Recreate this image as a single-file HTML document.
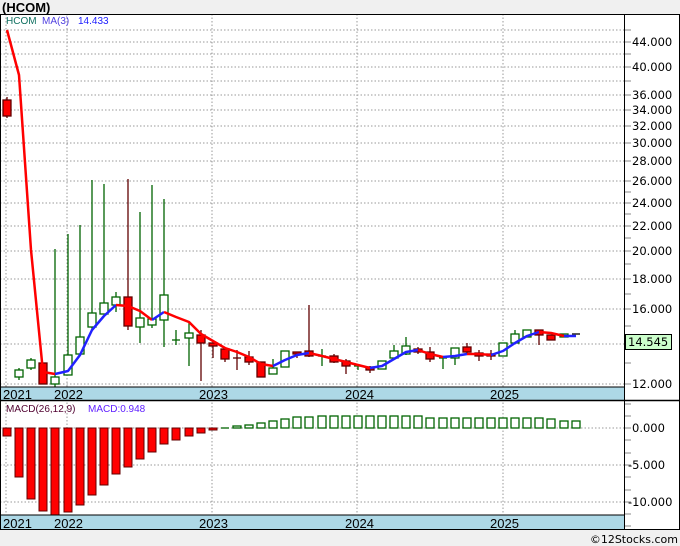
<!DOCTYPE html>
<html><head><meta charset="utf-8"><style>
body{margin:0;width:680px;height:546px;background:#f0f0f0;overflow:hidden;font-family:"Liberation Sans",sans-serif}
svg{position:absolute;left:0;top:0}
</style></head><body>
<svg width="680" height="546" viewBox="0 0 680 546" xmlns="http://www.w3.org/2000/svg" font-family="Liberation Sans, DejaVu Sans, sans-serif">
<rect x="0" y="0" width="680" height="546" fill="#f0f0f0"/>
<text x="2" y="12" font-size="13" font-weight="bold" fill="#000">(HCOM)</text>
<rect x="0" y="14" width="680" height="516" fill="#fff"/>
<g stroke="#999" stroke-dasharray="1.5,2" stroke-width="1">
<line x1="0" x2="624" y1="30" y2="30"/><line x1="0" x2="624" y1="42" y2="42"/><line x1="0" x2="624" y1="54" y2="54"/><line x1="0" x2="624" y1="67" y2="67"/><line x1="0" x2="624" y1="81" y2="81"/><line x1="0" x2="624" y1="95" y2="95"/><line x1="0" x2="624" y1="110" y2="110"/><line x1="0" x2="624" y1="126" y2="126"/><line x1="0" x2="624" y1="143" y2="143"/><line x1="0" x2="624" y1="161" y2="161"/><line x1="0" x2="624" y1="181" y2="181"/><line x1="0" x2="624" y1="203" y2="203"/><line x1="0" x2="624" y1="226" y2="226"/><line x1="0" x2="624" y1="251" y2="251"/><line x1="0" x2="624" y1="279" y2="279"/><line x1="0" x2="624" y1="309" y2="309"/><line x1="0" x2="624" y1="344" y2="344"/><line x1="0" x2="624" y1="384" y2="384"/>
<line x1="6" x2="6" y1="14" y2="530"/><line x1="67" x2="67" y1="14" y2="530"/><line x1="212" x2="212" y1="14" y2="530"/><line x1="357" x2="357" y1="14" y2="530"/><line x1="503" x2="503" y1="14" y2="530"/>
<line x1="0" x2="624" y1="428" y2="428"/><line x1="0" x2="624" y1="465" y2="465"/><line x1="0" x2="624" y1="502" y2="502"/>
</g>
<text x="6" y="24" font-size="10" fill="#107060">HCOM</text>
<text x="42" y="24" font-size="10" fill="#5040e0">MA(3)</text>
<text x="78" y="24" font-size="10" fill="#2020ff">14.433</text>
<g stroke-width="1.3">
<g stroke="#600000" fill="#f00">
<line x1="7" x2="7" y1="97" y2="118"/><rect x="3" y="100" width="8" height="16"/>
<rect x="39" y="363" width="8" height="21"/>
<line x1="128" x2="128" y1="179" y2="330"/><rect x="124" y="297" width="8" height="29"/>
<line x1="201" x2="201" y1="330" y2="381"/><rect x="197" y="335" width="8" height="8"/>
<line x1="213" x2="213" y1="340" y2="358"/><rect x="209" y="343" width="8" height="3"/>
<line x1="225" x2="225" y1="348" y2="362"/><rect x="221" y="349" width="8" height="10"/>
<line x1="237" x2="237" y1="350" y2="370"/><line x1="233" x2="241" y1="358" y2="358"/>
<line x1="249" x2="249" y1="351" y2="365"/><rect x="245" y="357" width="8" height="5"/>
<rect x="257" y="362" width="8" height="15"/>
<line x1="297" x2="297" y1="352" y2="358"/><rect x="293" y="352" width="8" height="2"/>
<line x1="309" x2="309" y1="305" y2="357"/><rect x="305" y="351" width="8" height="5"/>
<line x1="334" x2="334" y1="354" y2="363"/><rect x="330" y="356" width="8" height="6"/>
<line x1="346" x2="346" y1="359" y2="374"/><rect x="342" y="361" width="8" height="5"/>
<line x1="370" x2="370" y1="366" y2="373"/><rect x="366" y="367" width="8" height="3"/>
<line x1="418" x2="418" y1="347" y2="354"/><rect x="414" y="349" width="8" height="3"/>
<line x1="430" x2="430" y1="347" y2="362"/><rect x="426" y="352" width="8" height="7"/>
<line x1="467" x2="467" y1="343" y2="355"/><rect x="463" y="347" width="8" height="5"/>
<line x1="479" x2="479" y1="350" y2="361"/><rect x="475" y="353" width="8" height="3"/>
<line x1="491" x2="491" y1="350" y2="360"/><rect x="487" y="354" width="8" height="2"/>
<line x1="539" x2="539" y1="330" y2="345"/><rect x="535" y="330" width="8" height="5"/>
<rect x="547" y="335" width="8" height="5"/>
</g>
<g stroke="#006400" fill="#fff">
<line x1="19" x2="19" y1="368" y2="380"/><rect x="15" y="370" width="8" height="7"/>
<line x1="31" x2="31" y1="358" y2="370"/><rect x="27" y="360" width="8" height="8"/>
<line x1="55" x2="55" y1="249" y2="387"/><rect x="51" y="377" width="8" height="7"/>
<line x1="68" x2="68" y1="234" y2="375"/><rect x="64" y="355" width="8" height="20"/>
<line x1="80" x2="80" y1="225" y2="354"/><rect x="76" y="337" width="8" height="17"/>
<line x1="92" x2="92" y1="180" y2="330"/><rect x="88" y="313" width="8" height="14"/>
<line x1="104" x2="104" y1="184" y2="314"/><rect x="100" y="303" width="8" height="11"/>
<line x1="116" x2="116" y1="292" y2="312"/><rect x="112" y="297" width="8" height="8"/>
<line x1="140" x2="140" y1="212" y2="343"/><rect x="136" y="318" width="8" height="9"/>
<line x1="152" x2="152" y1="185" y2="328"/><rect x="148" y="319" width="8" height="6"/>
<line x1="164" x2="164" y1="199" y2="347"/><rect x="160" y="295" width="8" height="25"/>
<line x1="176" x2="176" y1="330" y2="345"/><line x1="172" x2="180" y1="340" y2="340"/>
<line x1="189" x2="189" y1="322" y2="366"/><rect x="185" y="333" width="8" height="5"/>
<line x1="273" x2="273" y1="359" y2="374"/><rect x="269" y="368" width="8" height="6"/>
<rect x="281" y="351" width="8" height="16"/>
<line x1="322" x2="322" y1="349" y2="366"/><line x1="318" x2="326" y1="356" y2="356"/>
<line x1="358" x2="358" y1="366" y2="370"/><line x1="354" x2="362" y1="366" y2="366"/>
<rect x="378" y="361" width="8" height="8"/>
<line x1="394" x2="394" y1="345" y2="358"/><rect x="390" y="351" width="8" height="7"/>
<line x1="406" x2="406" y1="337" y2="355"/><rect x="402" y="346" width="8" height="8"/>
<line x1="443" x2="443" y1="356" y2="369"/><line x1="439" x2="447" y1="358" y2="358"/>
<line x1="455" x2="455" y1="348" y2="365"/><rect x="451" y="348" width="8" height="10"/>
<rect x="499" y="343" width="8" height="13"/>
<line x1="515" x2="515" y1="330" y2="344"/><rect x="511" y="334" width="8" height="9"/>
<rect x="523" y="330" width="8" height="7"/>
<rect x="560" y="334" width="8" height="3"/>
</g>
<line x1="572" x2="580" y1="334" y2="334" stroke="#000"/>
</g>
<g fill="none" stroke-width="2.5" stroke-linejoin="round">
<polyline stroke="#f00" points="7,30 19,75 31,250 43,372 55,374"/>
<polyline stroke="#22f" points="55,374 68,371 80,355 92,330 104,316 116,305"/>
<polyline stroke="#f00" points="116,305 128,306 140,311 152,320"/>
<polyline stroke="#22f" points="152,320 164,312"/>
<polyline stroke="#f00" points="164,312 176,317 189,322 201,334 213,341 225,348 237,352 249,357 261,364 273,366"/>
<polyline stroke="#22f" points="273,366 285,360 297,355 309,353"/>
<polyline stroke="#f00" points="309,353 322,356 334,359 346,362 358,365 370,368"/>
<polyline stroke="#22f" points="370,368 382,366 394,359 406,352 418,350"/>
<polyline stroke="#f00" points="418,350 430,354 443,357"/>
<polyline stroke="#22f" points="443,357 455,356 467,354"/>
<polyline stroke="#f00" points="467,354 479,354 491,355"/>
<polyline stroke="#22f" points="491,355 503,351 515,343 527,336 539,332"/>
<polyline stroke="#f00" points="539,332 551,333 564,336"/>
<polyline stroke="#22f" points="564,336 576,336"/>
</g>
<text x="6" y="412" font-size="10" fill="#500030">MACD(26,12,9)</text>
<text x="88" y="412" font-size="10" fill="#6020ff">MACD:0.948</text>
<g fill="#f00" stroke="#600000" stroke-width="1">
<rect x="3" y="428" width="8" height="8"/><rect x="15" y="428" width="8" height="49"/><rect x="27" y="428" width="8" height="71"/><rect x="39" y="428" width="8" height="83"/><rect x="51" y="428" width="8" height="87"/><rect x="64" y="428" width="8" height="84"/><rect x="76" y="428" width="8" height="77"/><rect x="88" y="428" width="8" height="67"/><rect x="100" y="428" width="8" height="57"/><rect x="112" y="428" width="8" height="46"/><rect x="124" y="428" width="8" height="39"/><rect x="136" y="428" width="8" height="31"/><rect x="148" y="428" width="8" height="24"/><rect x="160" y="428" width="8" height="16"/><rect x="172" y="428" width="8" height="12"/><rect x="185" y="428" width="8" height="8"/><rect x="197" y="428" width="8" height="5"/><rect x="209" y="428" width="8" height="2"/>
</g>
<g fill="#fff" stroke="#006400" stroke-width="1.3">
<line x1="221" x2="229" y1="428" y2="428"/>
<rect x="233" y="426" width="8" height="2"/><rect x="245" y="425" width="8" height="3"/><rect x="257" y="423" width="8" height="5"/><rect x="269" y="421" width="8" height="7"/><rect x="281" y="419" width="8" height="9"/><rect x="293" y="417" width="8" height="11"/><rect x="305" y="417" width="8" height="11"/><rect x="318" y="416" width="8" height="12"/><rect x="330" y="416" width="8" height="12"/><rect x="342" y="416" width="8" height="12"/><rect x="354" y="416" width="8" height="12"/><rect x="366" y="416" width="8" height="12"/><rect x="378" y="416" width="8" height="12"/><rect x="390" y="416" width="8" height="12"/><rect x="402" y="416" width="8" height="12"/><rect x="414" y="416" width="8" height="12"/><rect x="426" y="418" width="8" height="10"/><rect x="439" y="418" width="8" height="10"/><rect x="451" y="418" width="8" height="10"/><rect x="463" y="418" width="8" height="10"/><rect x="475" y="418" width="8" height="10"/><rect x="487" y="418" width="8" height="10"/><rect x="499" y="418" width="8" height="10"/><rect x="511" y="418" width="8" height="10"/><rect x="523" y="418" width="8" height="10"/><rect x="535" y="418" width="8" height="10"/><rect x="547" y="419" width="8" height="9"/><rect x="560" y="421" width="8" height="7"/><rect x="572" y="421" width="8" height="7"/>
</g>
<rect x="0" y="387" width="624" height="13" fill="#add8e6"/>
<rect x="0" y="515" width="624" height="15" fill="#add8e6"/>
<line x1="0" x2="624" y1="387" y2="387" stroke="#000"/>
<line x1="0" x2="680" y1="400.5" y2="400.5" stroke="#000" stroke-width="1.5"/>
<line x1="0" x2="624" y1="515" y2="515" stroke="#000"/>
<g font-size="13" fill="#000">
<text x="3" y="399">2021</text><text x="54" y="399">2022</text><text x="199" y="399">2023</text><text x="345" y="399">2024</text><text x="490" y="399">2025</text>
<text x="3" y="528">2021</text><text x="54" y="528">2022</text><text x="199" y="528">2023</text><text x="345" y="528">2024</text><text x="490" y="528">2025</text>
</g>
<rect x="0.5" y="14.5" width="679" height="515" fill="none" stroke="#000"/>
<line x1="624.5" x2="624.5" y1="14" y2="530" stroke="#000"/>
<g stroke="#888">
<line x1="625" x2="631" y1="30" y2="30"/><line x1="625" x2="631" y1="42" y2="42"/><line x1="625" x2="631" y1="54" y2="54"/><line x1="625" x2="631" y1="67" y2="67"/><line x1="625" x2="631" y1="81" y2="81"/><line x1="625" x2="631" y1="95" y2="95"/><line x1="625" x2="631" y1="110" y2="110"/><line x1="625" x2="631" y1="126" y2="126"/><line x1="625" x2="631" y1="143" y2="143"/><line x1="625" x2="631" y1="161" y2="161"/><line x1="625" x2="631" y1="181" y2="181"/><line x1="625" x2="631" y1="192" y2="192"/><line x1="625" x2="631" y1="203" y2="203"/><line x1="625" x2="631" y1="214" y2="214"/><line x1="625" x2="631" y1="226" y2="226"/><line x1="625" x2="631" y1="238" y2="238"/><line x1="625" x2="631" y1="251" y2="251"/><line x1="625" x2="631" y1="264" y2="264"/><line x1="625" x2="631" y1="279" y2="279"/><line x1="625" x2="631" y1="294" y2="294"/><line x1="625" x2="631" y1="309" y2="309"/><line x1="625" x2="631" y1="326" y2="326"/><line x1="625" x2="631" y1="344" y2="344"/><line x1="625" x2="631" y1="363" y2="363"/><line x1="625" x2="631" y1="384" y2="384"/>
<line x1="625" x2="631" y1="404" y2="404"/><line x1="625" x2="631" y1="416" y2="416"/><line x1="625" x2="631" y1="428" y2="428"/><line x1="625" x2="631" y1="440" y2="440"/><line x1="625" x2="631" y1="453" y2="453"/><line x1="625" x2="631" y1="465" y2="465"/><line x1="625" x2="631" y1="477" y2="477"/><line x1="625" x2="631" y1="490" y2="490"/><line x1="625" x2="631" y1="502" y2="502"/><line x1="625" x2="631" y1="514" y2="514"/><line x1="625" x2="631" y1="526" y2="526"/>
</g>
<g font-size="11.5" fill="#000" font-family="DejaVu Sans, sans-serif">
<text x="632" y="46">44.000</text><text x="632" y="71">40.000</text><text x="632" y="99">36.000</text><text x="632" y="114">34.000</text><text x="632" y="130">32.000</text><text x="632" y="147">30.000</text><text x="632" y="165">28.000</text><text x="632" y="185">26.000</text><text x="632" y="207">24.000</text><text x="632" y="230">22.000</text><text x="632" y="255">20.000</text><text x="632" y="283">18.000</text><text x="632" y="313">16.000</text><text x="632" y="388">12.000</text>
<text x="632" y="432">0.000</text><text x="628" y="469">-5.000</text><text x="628" y="506">-10.000</text>
</g>
<rect x="625.5" y="334.5" width="46" height="15" fill="#ccffcc" stroke="#000"/>
<text x="628" y="346" font-size="11.5" fill="#000" font-family="DejaVu Sans, sans-serif">14.545</text>
<text x="678" y="543" font-size="11" fill="#000" text-anchor="end" font-family="DejaVu Sans, sans-serif">©12Stocks.com</text>
</svg>
</body></html>
